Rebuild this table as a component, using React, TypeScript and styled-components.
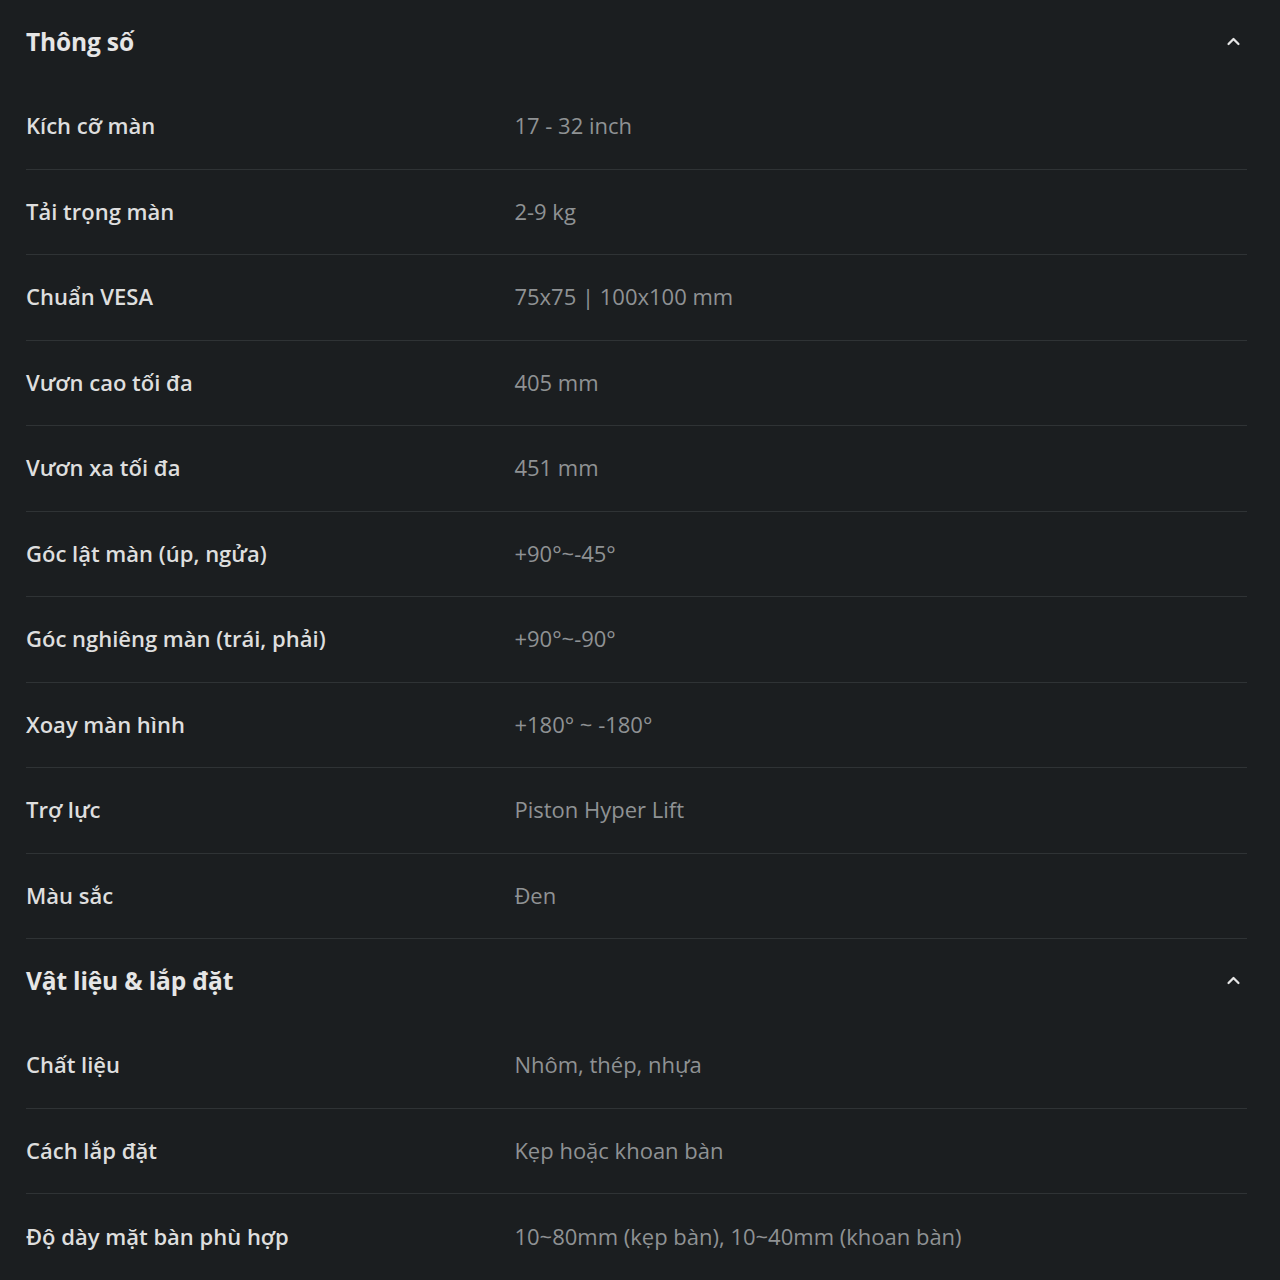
import React from "react";
import styled, { createGlobalStyle } from "styled-components";

const Global = createGlobalStyle`
  html, body { margin: 0; padding: 0; background: #1b1e20; }
  body { font-family: "Open Sans", "Noto Sans", sans-serif; -webkit-font-smoothing: antialiased; }
`;

const Page = styled.div`
  background: #1b1e20;
  min-height: 1280px;
  padding: 0 33px 0 26px;
  box-sizing: border-box;
`;

const Section = styled.section`
  display: flex;
  flex-direction: column;
`;

const Header = styled.div`
  display: flex;
  align-items: center;
  justify-content: space-between;
  height: 84px;
  padding-bottom: 2px;
  box-sizing: border-box;
`;

const Title = styled.h2`
  margin: 0;
  font-size: 24.5px;
  font-weight: 700;
  color: #e6e6e6;
  letter-spacing: -0.15px;
`;

const Toggle = styled.button`
  display: flex;
  align-items: center;
  justify-content: center;
  width: 24px;
  height: 24px;
  padding: 0;
  margin-right: 2px;
  border: 0;
  background: transparent;
  color: #e6e6e6;
`;

const Row = styled.div<{ $last?: boolean }>`
  display: grid;
  grid-template-columns: 40% 60%;
  align-items: center;
  height: 85.5px;
  padding-bottom: 2px;
  box-sizing: border-box;
  border-bottom: ${(p) => (p.$last ? "none" : "1px solid #2f3335")};
`;

const Label = styled.div`
  font-size: 22px;
  font-weight: 600;
  color: #dedede;
  letter-spacing: 0;
`;

const Value = styled.div`
  font-size: 22px;
  font-weight: 500;
  color: #8f9294;
  letter-spacing: 0;
`;

const Chevron = () => (
  <svg width="17" height="17" viewBox="0 0 24 24" fill="none" stroke="currentColor" strokeWidth="3.2" strokeLinecap="round" strokeLinejoin="round">
    <path d="M5 15.5l7-7 7 7" />
  </svg>
);

type Spec = [string, string];

const sections: { title: string; rows: Spec[] }[] = [
  {
    title: "Thông số",
    rows: [
      ["Kích cỡ màn", "17 - 32 inch"],
      ["Tải trọng màn", "2-9 kg"],
      ["Chuẩn VESA", "75x75 | 100x100 mm"],
      ["Vươn cao tối đa", "405 mm"],
      ["Vươn xa tối đa", "451 mm"],
      ["Góc lật màn (úp, ngửa)", "+90°~-45°"],
      ["Góc nghiêng màn (trái, phải)", "+90°~-90°"],
      ["Xoay màn hình", "+180° ~ -180°"],
      ["Trợ lực", "Piston Hyper Lift"],
      ["Màu sắc", "Đen"],
    ],
  },
  {
    title: "Vật liệu & lắp đặt",
    rows: [
      ["Chất liệu", "Nhôm, thép, nhựa"],
      ["Cách lắp đặt", "Kẹp hoặc khoan bàn"],
      ["Độ dày mặt bàn phù hợp", "10~80mm (kẹp bàn), 10~40mm (khoan bàn)"],
    ],
  },
];

export default function App() {
  return (
    <>
      <Global />
      <Page>
        {sections.map((s, si) => (
          <Section key={s.title}>
            <Header>
              <Title>{s.title}</Title>
              <Toggle aria-label="Thu gọn">
                <Chevron />
              </Toggle>
            </Header>
            {s.rows.map(([k, v], i) => (
              <Row key={k} $last={si === sections.length - 1 && i === s.rows.length - 1}>
                <Label>{k}</Label>
                <Value>{v}</Value>
              </Row>
            ))}
          </Section>
        ))}
      </Page>
    </>
  );
}
